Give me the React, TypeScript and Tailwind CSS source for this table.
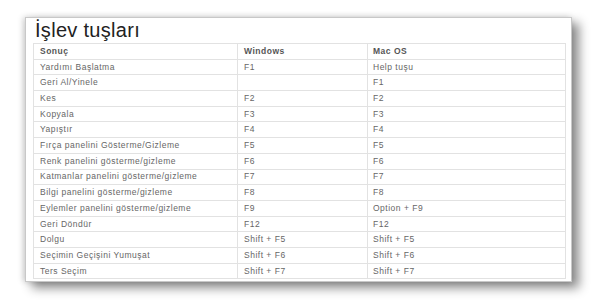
const rows: [string, string, string][] = [
  ['Yardımı Başlatma', 'F1', 'Help tuşu'],
  ['Geri Al/Yinele', '', 'F1'],
  ['Kes', 'F2', 'F2'],
  ['Kopyala', 'F3', 'F3'],
  ['Yapıştır', 'F4', 'F4'],
  ['Fırça panelini Gösterme/Gizleme', 'F5', 'F5'],
  ['Renk panelini gösterme/gizleme', 'F6', 'F6'],
  ['Katmanlar panelini gösterme/gizleme', 'F7', 'F7'],
  ['Bilgi panelini gösterme/gizleme', 'F8', 'F8'],
  ['Eylemler panelini gösterme/gizleme', 'F9', 'Option + F9'],
  ['Geri Döndür', 'F12', 'F12'],
  ['Dolgu', 'Shift + F5', 'Shift + F5'],
  ['Seçimin Geçişini Yumuşat', 'Shift + F6', 'Shift + F6'],
  ['Ters Seçim', 'Shift + F7', 'Shift + F7'],
];

export default function App() {
  return (
    <div className="w-[600px] h-[300px] bg-white pt-[17px] pl-[25px] font-['Liberation_Sans',Arial,sans-serif]">
      <div className="w-[547px] h-[265px] bg-white border border-[#c8c8c8] shadow-[7px_6px_10px_rgba(0,0,0,0.45),-2px_0_6px_rgba(0,0,0,0.18)] pl-[7px] pt-[1px]">
        <h1 className="text-[20px] leading-[22px] text-[#222] h-[24px] pl-[2px] tracking-[0.3px]">İşlev tuşları</h1>
        <table className="w-[533px] border-collapse text-[8.5px] text-[#666] tracking-[0.5px]">
          <colgroup>
            <col className="w-[204px]" />
            <col className="w-[130px]" />
            <col />
          </colgroup>
          <thead>
            <tr className="h-[15.7px]">
              <th className="border border-[#e2e2e2] text-left font-bold text-[#555] pl-[6px]">Sonuç</th>
              <th className="border border-[#e2e2e2] text-left font-bold text-[#555] pl-[6px]">Windows</th>
              <th className="border border-[#e2e2e2] text-left font-bold text-[#555] pl-[5px]">Mac OS</th>
            </tr>
          </thead>
          <tbody>
            {rows.map((r, i) => (
              <tr key={i} className="h-[15.7px]">
                <td className="border border-[#e2e2e2] pl-[6px]">{r[0]}</td>
                <td className="border border-[#e2e2e2] pl-[6px]">{r[1]}</td>
                <td className="border border-[#e2e2e2] pl-[5px]">{r[2]}</td>
              </tr>
            ))}
          </tbody>
        </table>
      </div>
    </div>
  );
}
